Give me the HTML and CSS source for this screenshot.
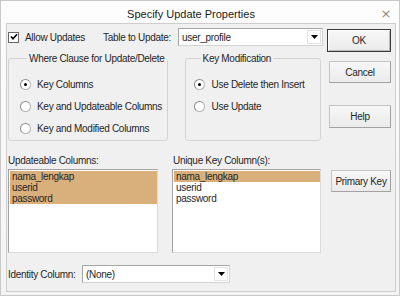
FILE: index.html
```html
<!DOCTYPE html>
<html>
<head>
<meta charset="utf-8">
<link rel="stylesheet" href="styles.css">
</head>
<body>
<div class="window">
  <div class="titlebar">
    <span class="title">Specify Update Properties</span>
    <span class="close">×</span>
  </div>
  <div class="client">
    <div class="left">
      <div class="row1">
        <span class="check"><svg width="8" height="8" viewBox="0 0 8 8"><path d="M1 3.5 L3 5.8 L7 1.2" fill="none" stroke="#000" stroke-width="1.6"/></svg></span>
        <span class="allow">Allow Updates</span>
        <span class="tbl">Table to Update:</span>
        <div class="combo table-combo"><span class="val">user_profile</span><span class="arrow"><svg width="7" height="4" viewBox="0 0 7 4"><path d="M0 0 H7 L3.5 4 Z" fill="#000"/></svg></span></div>
      </div>
      <div class="groups">
        <fieldset class="group g1">
          <legend>Where Clause for Update/Delete</legend>
          <div class="radio on"><span class="circle"></span>Key Columns</div>
          <div class="radio"><span class="circle"></span>Key and Updateable Columns</div>
          <div class="radio"><span class="circle"></span>Key and Modified Columns</div>
        </fieldset>
        <fieldset class="group g2">
          <legend>Key Modification</legend>
          <div class="radio on"><span class="circle"></span>Use Delete then Insert</div>
          <div class="radio"><span class="circle"></span>Use Update</div>
        </fieldset>
      </div>
      <div class="lists">
        <div class="listcol c1">
          <div class="lbl">Updateable Columns:</div>
          <div class="listbox">
            <div class="item sel">nama_lengkap</div>
            <div class="item sel">userid</div>
            <div class="item sel">password</div>
          </div>
        </div>
        <div class="listcol c2">
          <div class="lbl">Unique Key Column(s):</div>
          <div class="listbox">
            <div class="item sel">nama_lengkap</div>
            <div class="item">userid</div>
            <div class="item">password</div>
          </div>
        </div>
      </div>
      <div class="identity">
        <span class="idl">Identity Column:</span>
        <div class="combo id-combo"><span class="val">(None)</span><span class="arrow"><svg width="7" height="4" viewBox="0 0 7 4"><path d="M0 0 H7 L3.5 4 Z" fill="#000"/></svg></span></div>
      </div>
    </div>
    <div class="right">
      <div class="btn default ok">OK</div>
      <div class="btn cancel">Cancel</div>
      <div class="btn help">Help</div>
      <div class="btn pk">Primary Key</div>
    </div>
  </div>
</div>
</body>
</html>
```
FILE: styles.css
```css
html, body {
  margin: 0;
  padding: 0;
  background: #ffffff;
}
body {
  width: 400px;
  height: 296px;
  overflow: hidden;
  font-family: "Liberation Sans", Arial, sans-serif;
  font-size: 10px;
  letter-spacing: -0.3px;
  color: #262626;
  white-space: nowrap;
}
.window {
  width: 400px;
  height: 296px;
  box-sizing: border-box;
  border: 1px solid #c9c9c9;
  background: linear-gradient(#fdfdfd, #f3f3f3);
  padding: 0 3px 3px 5px;
  display: flex;
  flex-direction: column;
}
.titlebar {
  height: 22px;
  display: flex;
  align-items: center;
}
.title {
  flex: 1;
  text-align: center;
  font-size: 11px;
  letter-spacing: 0;
  color: #1a1a1a;
  padding-top: 3px;
}
.close {
  width: 20px;
  text-align: center;
  font-family: "DejaVu Sans", sans-serif;
  font-size: 13px;
  letter-spacing: 0;
  color: #8a8a8a;
  padding-top: 2px;
}
.client {
  flex: 1;
  border: 1px solid #cdcdcd;
  background: #f0f0f0;
  display: flex;
  padding-left: 1px;
}
.left {
  width: 315px;
  display: flex;
  flex-direction: column;
}
.row1 {
  margin-top: 4px;
  height: 18px;
  display: flex;
  align-items: center;
}
.check {
  width: 9px;
  height: 9px;
  border: 1px solid #6a6a6a;
  background: #fff;
  display: flex;
  align-items: center;
  justify-content: center;
  margin-right: 6px;
}
.allow {
  width: 60px;
}
.tbl {
  margin-left: 18px;
}
.combo {
  height: 18px;
  box-sizing: border-box;
  border: 1px solid #a6a6a6;
  border-right-color: #d4d4d4;
  border-bottom-color: #d4d4d4;
  background: #fff;
  display: flex;
  align-items: center;
}
.combo .val {
  flex: 1;
  padding-left: 3px;
}
.combo .arrow {
  width: 14px;
  height: 14px;
  box-sizing: border-box;
  border: 1px solid #e2e2e2;
  margin-right: 1px;
  display: flex;
  align-items: center;
  justify-content: center;
}
.table-combo {
  margin-left: auto;
  margin-right: 0;
  width: 145px;
}
.groups {
  margin-top: 6px;
  display: flex;
}
.group {
  margin: 0;
  height: 89px;
  box-sizing: border-box;
  border: 1px solid #d3d3d3;
  border-radius: 3px;
  padding: 8px 0 0 0;
}
.group legend {
  padding: 0 2px;
  margin-left: 7px;
  line-height: 13px;
}
.g1 {
  width: 158px;
  padding-left: 11px;
}
.g2 {
  width: 136px;
  margin-left: 17px;
  padding-left: 8px;
}
.radio {
  height: 22px;
  display: flex;
  align-items: center;
}
.circle {
  width: 11px;
  height: 11px;
  box-sizing: border-box;
  border-radius: 50%;
  border: 1px solid #b4b4b4;
  border-top-color: #8c8c8c;
  border-left-color: #8c8c8c;
  background: #fff;
  margin-right: 6px;
  display: flex;
  align-items: center;
  justify-content: center;
}
.g2 .circle {
  margin-right: 7px;
}
.radio.on .circle::after {
  content: "";
  width: 3px;
  height: 3px;
  border-radius: 50%;
  background: #000;
}
.lists {
  margin-top: 13px;
  display: flex;
}
.listcol .lbl {
  line-height: 13px;
  margin-bottom: 2px;
}
.c1 {
  width: 150px;
}
.c2 {
  width: 149px;
  margin-left: 14px;
}
.c2 .lbl {
  padding-left: 1px;
}
.listbox {
  height: 84px;
  box-sizing: border-box;
  border: 1px solid #a3a3a3;
  border-right-color: #dadada;
  border-bottom-color: #dadada;
  background: #fff;
  padding: 1px 0 0 1px;
}
.item {
  height: 11px;
  line-height: 11px;
  padding-left: 2px;
}
.item.sel {
  background: #d9b07b;
}
.identity {
  margin-top: 12px;
  height: 18px;
  display: flex;
  align-items: center;
}
.idl {
  width: 74px;
}
.id-combo {
  width: 148px;
}
.right {
  margin-left: 4px;
  width: 64px;
  display: flex;
  flex-direction: column;
  align-items: flex-end;
}
.btn {
  box-sizing: border-box;
  height: 22px;
  display: flex;
  align-items: center;
  justify-content: center;
  background: linear-gradient(#f7f7f7, #ebebeb);
  border: 1px solid #c4c4c4;
  border-right-color: #a2a2a2;
  border-bottom-color: #a2a2a2;
}
.btn.default {
  border: 1px solid #3a3a3a;
  box-shadow: inset 1px 1px 0 #ffffff, inset -1px -1px 0 #b8b8b8;
}
.ok {
  width: 64px;
  height: 23px;
  margin-top: 5px;
}
.cancel {
  width: 62px;
  margin-top: 9px;
}
.help {
  width: 62px;
  height: 23px;
  margin-top: 22px;
}
.pk {
  width: 60px;
  margin-top: 42px;
}
```
